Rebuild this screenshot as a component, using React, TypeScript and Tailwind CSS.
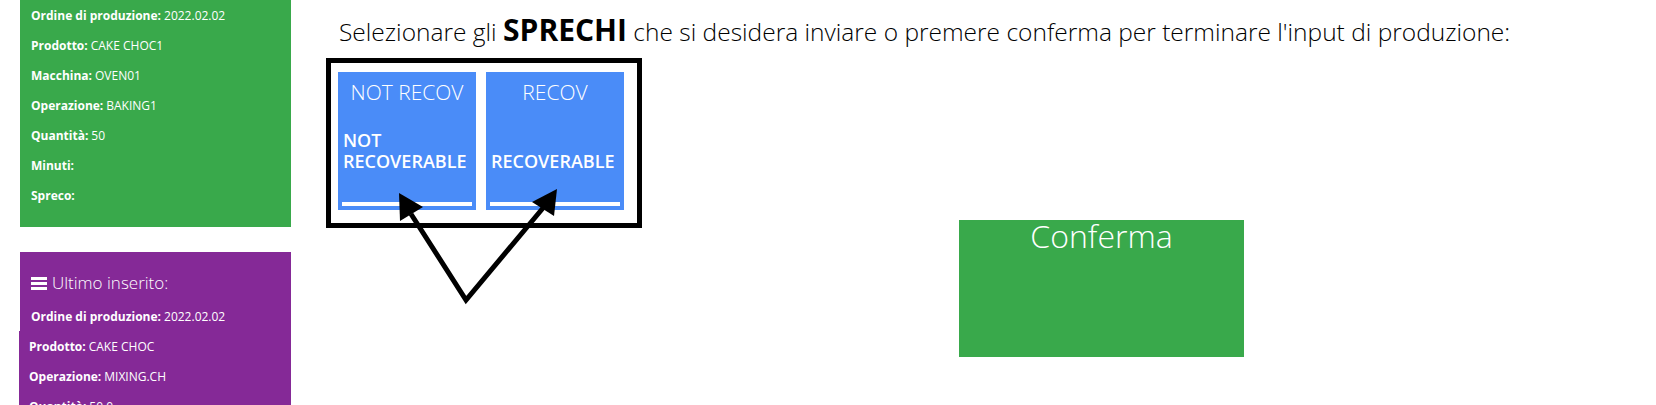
import React from "react";

type Row = { label: string; value: string };

const ordine: Row[] = [
  { label: "Ordine di produzione:", value: "2022.02.02" },
  { label: "Prodotto:", value: "CAKE CHOC1" },
  { label: "Macchina:", value: "OVEN01" },
  { label: "Operazione:", value: "BAKING1" },
  { label: "Quantità:", value: "50" },
  { label: "Minuti:", value: "" },
  { label: "Spreco:", value: "" },
];

const ultimo: Row[] = [
  { label: "Prodotto:", value: "CAKE CHOC" },
  { label: "Operazione:", value: "MIXING.CH" },
  { label: "Quantità:", value: "50.0" },
];

const sprechi = [
  { code: "NOT RECOV", name: "NOT RECOVERABLE" },
  { code: "RECOV", name: "RECOVERABLE" },
];

function InfoRow({ row }: { row: Row }) {
  return (
    <div className="h-[30px] flex items-center text-[12px] text-white whitespace-nowrap">
      <span className="font-bold">{row.label}</span>
      {row.value && <span className="ml-[3px]">{row.value}</span>}
    </div>
  );
}

function WasteCard({ code, name }: { code: string; name: string }) {
  return (
    <button className="w-[138px] h-[138px] bg-[#4a8cf8] text-white flex flex-col text-left">
      <div className="h-[42px] w-full flex items-center justify-center text-[21px] font-light">
        {code}
      </div>
      <div className="h-[58px] w-full flex items-end px-[5px] text-[18px] font-semibold leading-[21px]">
        {name}
      </div>
      <div className="mt-[30px] mx-[4px] h-[4px] bg-white self-stretch" />
    </button>
  );
}

export default function App() {
  return (
    <div className="relative w-[1656px] h-[405px] overflow-hidden bg-white flex font-['Open_Sans',sans-serif]">
      <aside className="w-[291px] pl-[20px] shrink-0">
        <div className="bg-[#39a94b] pl-[11px] pt-[1px] h-[227px]">
          {ordine.map((r) => (
            <InfoRow key={r.label} row={r} />
          ))}
        </div>

        <div className="mt-[25px] bg-[#852997] pl-[11px] pt-[16px]">
          <div className="h-[30px] flex items-center text-white text-[17px] font-light">
            <svg width="16" height="13" viewBox="0 0 16 13" className="mr-[5px]">
              <rect x="0" y="0" width="16" height="3" fill="white" />
              <rect x="0" y="5" width="16" height="3" fill="white" />
              <rect x="0" y="10" width="16" height="3" fill="white" />
            </svg>
            Ultimo inserito:
          </div>
          <div className="mt-[4px] h-[29px] flex items-center text-[12px] text-white whitespace-nowrap">
            <span className="font-bold">Ordine di produzione:</span>
            <span className="ml-[3px]">2022.02.02</span>
          </div>
        </div>
        <div className="-ml-[1px] bg-[#852997] pl-[10px] pt-[1px] h-[120px]">
          {ultimo.map((r) => (
            <InfoRow key={r.label} row={r} />
          ))}
        </div>
      </aside>

      <main className="flex-1 pl-[35px]">
        <h3 className="pl-[13px] pt-[17px] h-[58px] text-[24.5px] leading-[30px] font-light text-black whitespace-nowrap">
          Selezionare gli{" "}
          <b className="font-bold text-[30px] leading-[20px]">SPRECHI</b> che si desidera inviare
          o premere conferma per terminare l'input di produzione:
        </h3>

        <div className="flex items-start">
          <div className="w-[316px] h-[170px] border-[5px] border-black pl-[7px] pt-[9px] flex gap-[10px]">
            {sprechi.map((s) => (
              <WasteCard key={s.code} code={s.code} name={s.name} />
            ))}
          </div>

          <button className="ml-[317px] mt-[162px] w-[285px] h-[137px] bg-[#39a94b] text-white text-[32px] leading-[32px] font-light flex justify-center items-start">
            Conferma
          </button>
        </div>
      </main>

      <svg
        className="absolute left-0 top-0 pointer-events-none"
        width="1656"
        height="405"
        viewBox="0 0 1656 405"
      >
        <polyline
          points="411,214 466,300 543,208"
          fill="none"
          stroke="black"
          strokeWidth="5"
          strokeLinejoin="miter"
        />
        <polygon points="399,193 400,221 423,207" fill="black" />
        <polygon points="557,189 532,202 554,216" fill="black" />
      </svg>
    </div>
  );
}
